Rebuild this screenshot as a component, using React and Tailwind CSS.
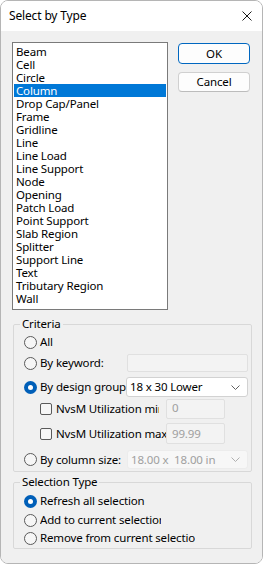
import React from "react";

const items = [
  "Beam",
  "Cell",
  "Circle",
  "Column",
  "Drop Cap/Panel",
  "Frame",
  "Gridline",
  "Line",
  "Line Load",
  "Line Support",
  "Node",
  "Opening",
  "Patch Load",
  "Point Support",
  "Slab Region",
  "Splitter",
  "Support Line",
  "Text",
  "Tributary Region",
  "Wall",
];

const Radio = ({ on }) =>
  on ? (
    <span className="w-[13px] h-[13px] rounded-full bg-[#005fb8] flex items-center justify-center shrink-0">
      <span className="w-[5px] h-[5px] rounded-full bg-white" />
    </span>
  ) : (
    <span className="w-[13px] h-[13px] rounded-full border border-[#5a5a5a] bg-[#f6f6f6] shrink-0" />
  );

const Check = () => (
  <span className="w-[12px] h-[12px] rounded-[2px] border border-[#5a5a5a] bg-[#f6f6f6] shrink-0" />
);

const Chevron = ({ color }) => (
  <svg width="9" height="5" viewBox="0 0 9 5" className="shrink-0">
    <path d="M0.5 0.5 L4.5 4.5 L8.5 0.5" fill="none" stroke={color} strokeWidth="1" />
  </svg>
);

const App = () => {
  return (
    <div
      className="w-[263px] h-[565px] bg-white text-[11.5px] tracking-[-0.15px] text-black"
      style={{ fontFamily: '"Noto Sans", "Open Sans", sans-serif' }}
    >
      <div className="w-full h-[564px] flex flex-col border border-[#b5b5b5] rounded-[8px] overflow-hidden">
        {/* title bar */}
        <div className="h-[30px] bg-white flex items-center justify-between pl-[8px] pr-[10px] shrink-0">
          <span className="leading-[16px] text-[12px]">Select by Type</span>
          <svg width="10" height="10" viewBox="0 0 10 10">
            <path d="M0.5 0.5 L9.5 9.5 M9.5 0.5 L0.5 9.5" stroke="#1a1a1a" strokeWidth="1" />
          </svg>
        </div>

        <div className="flex-1 bg-[#f0f0f0] px-[11px]">
          <div className="flex mt-[11px]">
            <div className="w-[156px] h-[268px] border border-[#7a7a7a] bg-white pt-[2px] px-px">
              {items.map((it) => (
                <div
                  key={it}
                  className={`h-[13px] leading-[13px] pl-[2px] whitespace-nowrap ${
                    it === "Column" ? "bg-[#0078d7] text-white" : ""
                  }`}
                >
                  {it}
                </div>
              ))}
            </div>
            <div className="ml-[10px] flex flex-col">
              <button className="mt-px w-[72px] h-[21px] rounded-[4px] border border-[#0067c0] bg-[#fdfdfd] leading-[16px]">
                OK
              </button>
              <button className="mt-[8px] w-[72px] h-[20px] rounded-[4px] border border-[#d0d0d0] border-b-[#bcbcbc] bg-[#fdfdfd] leading-[16px]">
                Cancel
              </button>
            </div>
          </div>

          {/* Criteria */}
          <fieldset className="ml-px mt-[6px] w-[239px] border border-[#d8d8d8] rounded-[2px] pl-[10px] pr-px pb-[2px]">
            <legend className="-ml-[4px] px-[2px] leading-[16px]">Criteria</legend>

            <div className="mt-[2px] h-[16px] flex items-center gap-[3px]">
              <Radio />
              <span>All</span>
            </div>

            <div className="mt-[4px] h-[18px] flex items-center">
              <div className="w-[103px] flex items-center gap-[3px]">
                <Radio />
                <span className="whitespace-nowrap">By keyword:</span>
              </div>
              <div className="w-[121px] h-[18px] border border-[#e0e0e0] bg-[#f3f3f3] rounded-[2px]" />
            </div>

            <div className="mt-[5px] h-[20px] flex items-center">
              <div className="w-[102px] flex items-center gap-[3px]">
                <Radio on />
                <span className="whitespace-nowrap">By design group</span>
              </div>
              <div className="w-[122px] h-[20px] border border-[#d2d2d2] bg-white rounded-[3px] flex items-center justify-between pl-[3px] pr-[7px]">
                <span>18 x 30 Lower</span>
                <Chevron color="#606060" />
              </div>
            </div>

            <div className="mt-[2px] h-[20px] flex items-center pl-[16px]">
              <div className="w-[119px] flex items-center gap-[4px]">
                <Check />
                <span className="w-[103px] overflow-hidden whitespace-nowrap">NvsM Utilization min</span>
              </div>
              <div className="ml-[7px] w-[59px] h-[20px] border border-[#e0e0e0] bg-[#f3f3f3] rounded-[2px] pl-[5px] leading-[16px] text-[#a0a0a0]">
                0
              </div>
            </div>

            <div className="mt-[4px] h-[21px] flex items-center pl-[16px]">
              <div className="w-[126px] flex items-center gap-[4px]">
                <Check />
                <span className="w-[110px] overflow-hidden whitespace-nowrap">NvsM Utilization max</span>
              </div>
              <div className="w-[59px] h-[21px] border border-[#e0e0e0] bg-[#f3f3f3] rounded-[2px] pl-[5px] pt-[2px] leading-[16px] text-[#a0a0a0]">
                99.99
              </div>
            </div>

            <div className="mt-[6px] h-[19px] flex items-center">
              <div className="w-[103px] flex items-center gap-[3px]">
                <Radio />
                <span className="whitespace-nowrap">By column size:</span>
              </div>
              <div className="w-[121px] h-[19px] border border-[#ececec] bg-[#f7f7f7] rounded-[3px] flex items-center justify-between pl-[3px] pr-[7px] text-[#a0a0a0]">
                <span className="whitespace-pre">18.00 x  18.00 in</span>
                <Chevron color="#b0b0b0" />
              </div>
            </div>
          </fieldset>

          {/* Selection Type */}
          <fieldset className="ml-px mt-[2px] w-[239px] border border-[#d8d8d8] rounded-[2px] pl-[10px] pb-[2px]">
            <legend className="-ml-[4px] px-[2px] leading-[16px]">Selection Type</legend>
            <div className="mt-[3px] h-[16px] flex items-center gap-[3px]">
              <Radio on />
              <span className="w-[151px] overflow-hidden whitespace-nowrap">Refresh all selection</span>
            </div>
            <div className="mt-[3px] h-[16px] flex items-center gap-[3px]">
              <Radio />
              <span className="w-[121px] overflow-hidden whitespace-nowrap">Add to current selection</span>
            </div>
            <div className="mt-[2px] h-[16px] flex items-center gap-[3px]">
              <Radio />
              <span className="w-[155px] overflow-hidden whitespace-nowrap">Remove from current selection</span>
            </div>
          </fieldset>
        </div>
      </div>
    </div>
  );
};

export default App;
